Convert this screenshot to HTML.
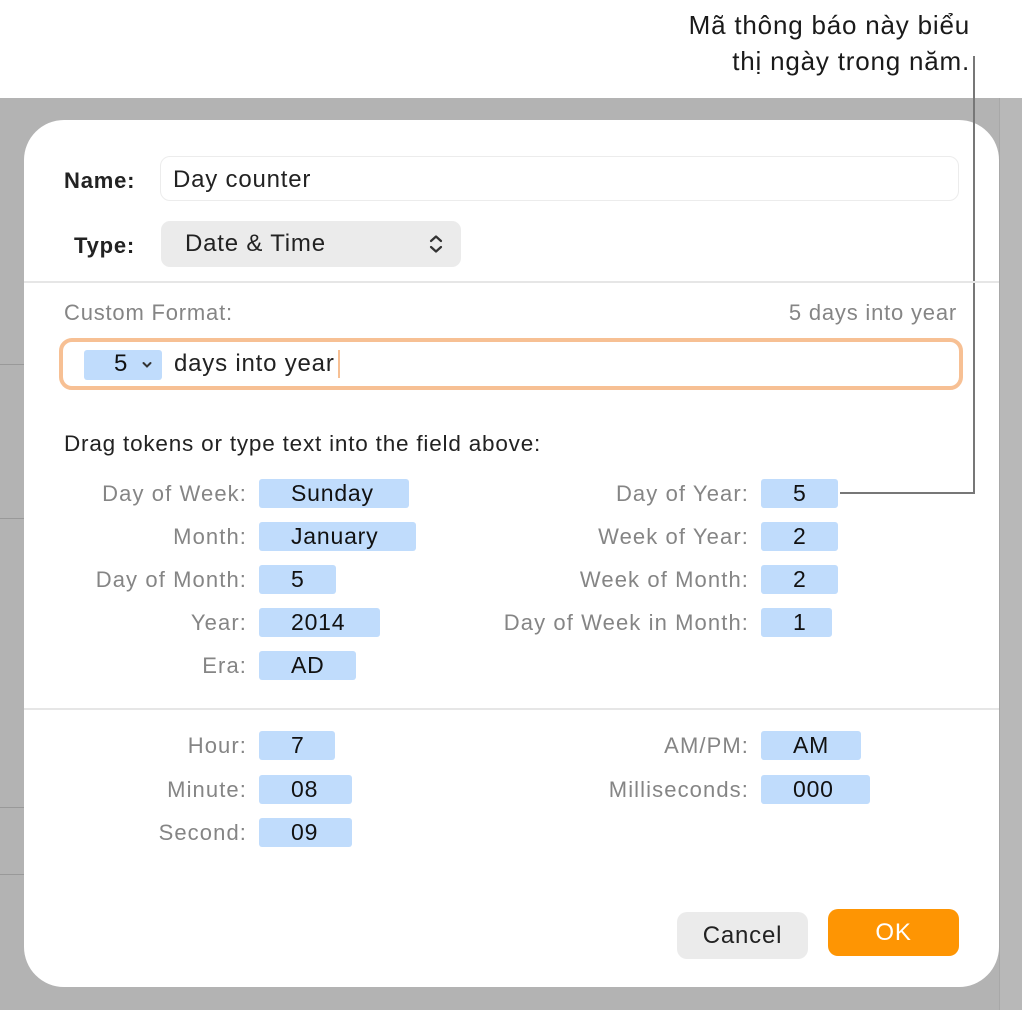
<!DOCTYPE html>
<html><head><meta charset="utf-8"><style>
*{margin:0;padding:0;box-sizing:border-box}
body{width:1024px;height:1013px;background:#fff;position:relative;overflow:hidden;font-family:"Liberation Sans","Noto Sans CJK SC",sans-serif;letter-spacing:0.05em}
.a{position:absolute;white-space:nowrap}
.bg{left:0;top:98px;width:1022px;height:912px;background:#b3b3b3}
.rs{left:999px;top:98px;width:23px;height:912px;background:#b8b8b8;border-left:1px solid #a8a8a8}
.dlg{left:24px;top:120px;width:975px;height:867px;background:#fff;border-radius:40px}
.lbl{font-size:22px;color:#858585;text-align:right;width:240px;letter-spacing:1.1px}
.tk{background:#c0dcfc;border-radius:3px;height:29px;font-size:23px;color:#111;padding-left:32px;line-height:29px}
.hr{height:2px;background:#e6e6e6}
</style></head><body>
<div class="a bg"></div>
<div class="a rs"></div>
<div class="a" style="left:0;top:364px;width:24px;height:1px;background:#999"></div>
<div class="a" style="left:0;top:518px;width:24px;height:1px;background:#999"></div>
<div class="a" style="left:0;top:807px;width:24px;height:1px;background:#999"></div>
<div class="a" style="left:0;top:874px;width:24px;height:1px;background:#999"></div>
<div class="a dlg"></div>
<div class="a" style="right:54px;top:7px;font-size:26px;color:#1a1a1a;text-align:right;line-height:36px">Mã thông báo này biểu<br>thị ngày trong năm.</div>
<div class="a" style="left:973px;top:56px;width:2px;height:438px;background:#777"></div>
<div class="a" style="left:840px;top:492px;width:135px;height:2px;background:#777"></div>

<div class="a" style="left:64px;top:168px;font-size:22px;font-weight:bold;color:#222">Name:</div>
<div class="a" style="left:160px;top:156px;width:799px;height:45px;border:1.5px solid #ececec;border-radius:10px;font-size:24px;color:#222;padding:9px 0 0 12px">Day counter</div>
<div class="a" style="left:74px;top:233px;font-size:22px;font-weight:bold;color:#222">Type:</div>
<div class="a" style="left:161px;top:221px;width:300px;height:46px;background:#ebebeb;border-radius:9px;font-size:24px;color:#222;padding:9px 0 0 24px">Date &amp; Time</div>
<svg class="a" style="left:428px;top:234px" width="16" height="20" viewBox="0 0 16 20"><path d="M3 7 L8 2.5 L13 7 M3 13 L8 17.5 L13 13" fill="none" stroke="#333" stroke-width="2.2" stroke-linecap="round" stroke-linejoin="round"/></svg>
<div class="a hr" style="left:24px;top:281px;width:975px"></div>

<div class="a" style="left:64px;top:300px;font-size:22px;color:#858585">Custom Format:</div>
<div class="a" style="right:67px;top:300px;font-size:22px;color:#858585">5 days into year</div>
<div class="a" style="left:59px;top:338px;width:904px;height:52px;border:4px solid #f7c094;border-radius:13px"></div>
<div class="a" style="left:84px;top:350px;width:78px;height:30px;background:#c0dcfc;border-radius:3px;font-size:24px;color:#111;padding:0 0 0 30px">5</div>
<svg class="a" style="left:142px;top:361px" width="10" height="8" viewBox="0 0 10 8"><path d="M1.5 2 L5 5.5 L8.5 2" fill="none" stroke="#333" stroke-width="2" stroke-linecap="round"/></svg>
<div class="a" style="left:174px;top:350px;font-size:24px;color:#222">days into year</div>
<div class="a" style="left:338px;top:350px;width:2px;height:28px;background:#f7c094"></div>

<div class="a" style="left:64px;top:431px;font-size:22.5px;color:#222">Drag tokens or type text into the field above:</div>

<div class="a lbl" style="left:7px;top:481px">Day of Week:</div><div class="a tk" style="left:259px;top:479px;width:150px">Sunday</div>
<div class="a lbl" style="left:7px;top:524px">Month:</div><div class="a tk" style="left:259px;top:522px;width:157px">January</div>
<div class="a lbl" style="left:7px;top:567px">Day of Month:</div><div class="a tk" style="left:259px;top:565px;width:77px">5</div>
<div class="a lbl" style="left:7px;top:610px">Year:</div><div class="a tk" style="left:259px;top:608px;width:121px">2014</div>
<div class="a lbl" style="left:7px;top:653px">Era:</div><div class="a tk" style="left:259px;top:651px;width:97px">AD</div>

<div class="a lbl" style="left:409px;top:481px;width:340px">Day of Year:</div><div class="a tk" style="left:761px;top:479px;width:77px">5</div>
<div class="a lbl" style="left:409px;top:524px;width:340px">Week of Year:</div><div class="a tk" style="left:761px;top:522px;width:77px">2</div>
<div class="a lbl" style="left:409px;top:567px;width:340px">Week of Month:</div><div class="a tk" style="left:761px;top:565px;width:77px">2</div>
<div class="a lbl" style="left:409px;top:610px;width:340px">Day of Week in Month:</div><div class="a tk" style="left:761px;top:608px;width:71px">1</div>

<div class="a hr" style="left:24px;top:708px;width:975px"></div>

<div class="a lbl" style="left:7px;top:733px">Hour:</div><div class="a tk" style="left:259px;top:731px;width:76px">7</div>
<div class="a lbl" style="left:7px;top:777px">Minute:</div><div class="a tk" style="left:259px;top:775px;width:93px">08</div>
<div class="a lbl" style="left:7px;top:820px">Second:</div><div class="a tk" style="left:259px;top:818px;width:93px">09</div>
<div class="a lbl" style="left:409px;top:733px;width:340px">AM/PM:</div><div class="a tk" style="left:761px;top:731px;width:100px">AM</div>
<div class="a lbl" style="left:409px;top:777px;width:340px">Milliseconds:</div><div class="a tk" style="left:761px;top:775px;width:109px">000</div>

<div class="a" style="left:677px;top:912px;width:131px;height:47px;background:#ebebeb;border-radius:10px;font-size:24px;color:#222;text-align:center;line-height:48px">Cancel</div>
<div class="a" style="left:828px;top:909px;width:131px;height:47px;background:#fe9503;border-radius:10px;font-size:24px;color:#fff;text-align:center;line-height:47px">OK</div>
</body></html>
